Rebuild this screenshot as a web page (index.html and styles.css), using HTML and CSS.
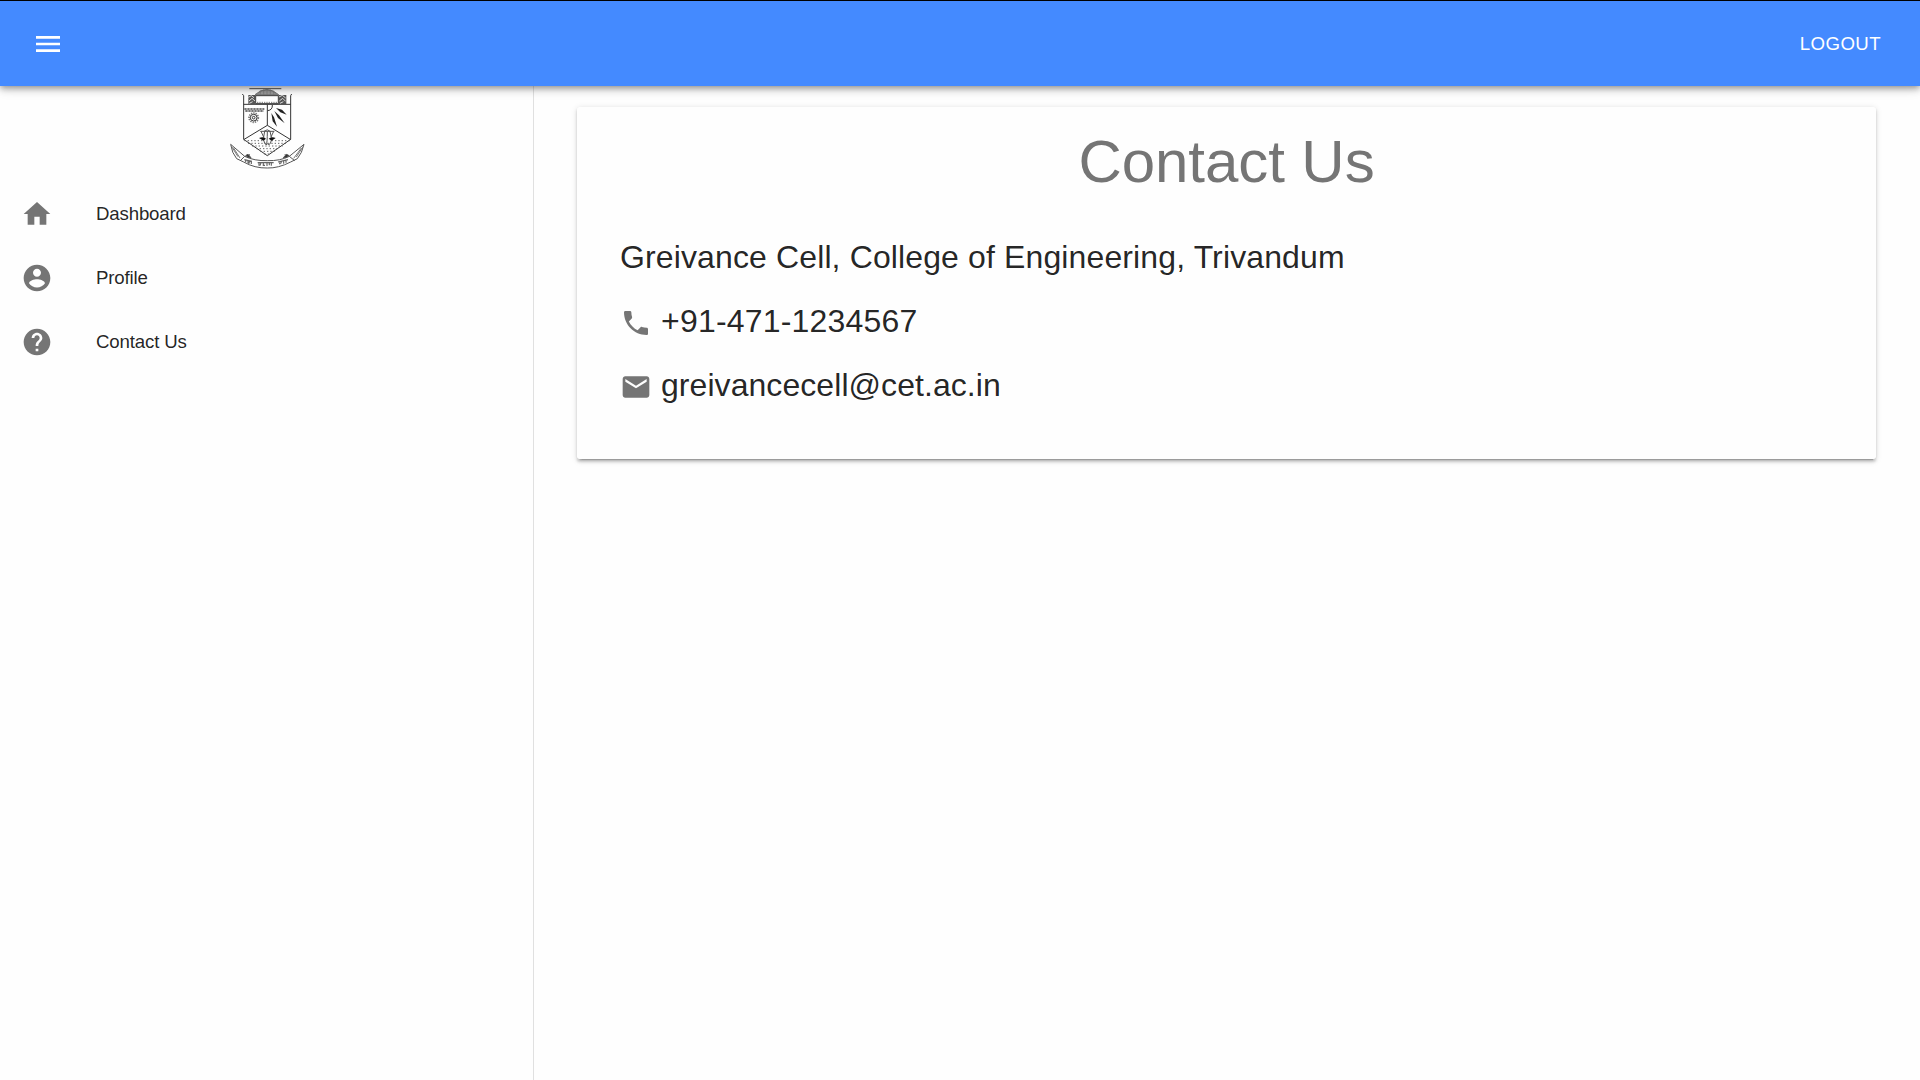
FILE: index.html
```html
<!DOCTYPE html>
<html lang="en">
<head>
<meta charset="utf-8">
<title>Contact Us</title>
<link rel="stylesheet" href="styles.css">
</head>
<body>
<header class="app-bar">
  <svg class="icon menu-icon" viewBox="0 0 24 24"><path d="M3 18h18v-2H3v2zm0-5h18v-2H3v2zm0-7v2h18V6H3z"/></svg>
  <span class="logout">LOGOUT</span>
</header>
<div class="layout">
  <aside class="sidebar">
    <svg class="emblem" viewBox="54 33 234 252">
      <g fill="none" stroke="#333" stroke-width="3">
        <path d="M118 41H214" stroke="#555"/>
        <path d="M135 59Q170 28 206 59Z" fill="#999" stroke="#777"/>
        <path d="M143 56Q170 34 199 56M151 46V60M161 43V60M171 41V60M181 43V60M191 47V60" stroke="#777" stroke-width="2"/>
        <path d="M97 57L101 62V193L172 242L242 193V62L245 57M101 88H242"/>
        <path d="M137 62H205V86H137Z" fill="#fff"/>
        <path d="M172 88V151M101 194L172 151L242 194"/>
        <path d="M187 90Q188 105 173 107"/>
        <path d="M141 82H203" stroke="#777" stroke-dasharray="4 3"/>
        <path d="M103 102H163M106 108H161" stroke="#777" stroke-width="6" stroke-dasharray="7 2"/>
        <circle cx="131" cy="128" r="14" stroke="#777" stroke-width="5" stroke-dasharray="4 3"/>
        <circle cx="131" cy="128" r="10"/><circle cx="131" cy="128" r="4"/>
      </g>
      <g fill="#555"><path d="M115 60H137V87H115ZM205 60H229V87H205Z"/></g>
      <path d="M115 67L124 62L132 68M117 78L126 70L135 78M118 85L128 80M207 66L217 61L227 69M208 78L218 70L227 79M210 85L220 80" fill="none" stroke="#ddd" stroke-width="3"/>
      <g fill="#222"><path d="M198 99L216 104L230 119L211 112ZM193 108L207 121L224 145L204 129ZM184 114L192 127L201 155L188 139Z"/></g>
      <g stroke="#555" fill="none" stroke-width="3">
        <path d="M151 169H193M153 169L161 186M191 169L183 186M164 169Q156 202 169 210Q172 202 172 169M180 169Q190 202 176 210L172 205M162 169Q172 160 181 169"/>
        <path d="M103 197H160M185 197H240M114 205H230M126 213H218M139 221H205M151 229H194M163 237H182" stroke="#666" stroke-dasharray="4 6"/>
      </g>
      <path d="M147 189Q160 183 168 191L160 197ZM197 189Q185 183 176 191L185 197Z" fill="#111"/>
      <g fill="none" stroke="#555" stroke-width="3">
        <path d="M62 208L104 244Q133 258 172 257Q211 258 238 244L282 208Q276 235 262 251L242 261Q205 280 172 279Q134 280 101 261L80 251Q66 235 62 208Z"/>
        <path d="M104 244L90 258M238 244L254 257M105 244L120 239M239 244L224 239"/>
        <path d="M65 215L84 245M70 218L90 249M279 215L259 246M274 219L251 250" stroke="#777"/>
        <path d="M108 241L114 238L123 248L113 247ZM236 241L229 238L220 248L231 247Z" fill="#333"/>
        <path d="M103 254L126 259M107 255V262M114 257V265M119 258L116 267M124 259V267M143 263H191M147 263V272M153 263L150 272M160 263V271H165M171 263V273M178 263V271M184 263V272M204 261L234 254M209 260V268M215 258L212 266M221 257V266M228 255V263" stroke="#666" stroke-width="3.5"/>
      </g>
    </svg>
    <nav class="nav">
      <div class="nav-item"><svg class="icon" viewBox="0 0 24 24"><path d="M10 20v-6h4v6h5v-8h3L12 3 2 12h3v8z"/></svg><span>Dashboard</span></div>
      <div class="nav-item"><svg class="icon" viewBox="0 0 24 24"><path d="M12 2C6.48 2 2 6.48 2 12s4.48 10 10 10 10-4.48 10-10S17.520 2 12 2zm0 3c1.660 0 3 1.340 3 3s-1.340 3-3 3-3-1.340-3-3 1.340-3 3-3zm0 14.200c-2.500 0-4.710-1.280-6-3.220.030-1.990 4-3.080 6-3.080 1.990 0 5.970 1.090 6 3.080-1.290 1.940-3.500 3.220-6 3.220z"/></svg><span>Profile</span></div>
      <div class="nav-item"><svg class="icon" viewBox="0 0 24 24"><path d="M12 2C6.48 2 2 6.48 2 12s4.480 10 10 10 10-4.480 10-10S17.520 2 12 2zm1 17h-2v-2h2v2zm2.070-7.750l-.9.920C13.450 12.900 13 13.500 13 15h-2v-.5c0-1.100.450-2.100 1.170-2.830l1.240-1.260c.370-.360.590-.860.590-1.410 0-1.100-.9-2-2-2s-2 .9-2 2H8c0-2.210 1.790-4 4-4s4 1.790 4 4c0 .880-.360 1.680-.930 2.250z"/></svg><span>Contact Us</span></div>
    </nav>
  </aside>
  <main class="content">
    <section class="card">
      <h1 class="title">Contact Us</h1>
      <p class="line">Greivance Cell, College of Engineering, Trivandum</p>
      <p class="line phone"><svg class="icon" viewBox="0 0 24 24"><path d="M6.620 10.790c1.440 2.830 3.760 5.140 6.590 6.590l2.200-2.200c.270-.270.670-.360 1.020-.240 1.120.370 2.330.570 3.570.570.550 0 1 .450 1 1V20c0 .550-.450 1-1 1-9.390 0-17-7.610-17-17 0-.550.450-1 1-1h3.500c.550 0 1 .450 1 1 0 1.250.2 2.450.570 3.570.110.350.030.740-.250 1.020l-2.200 2.200z"/></svg><span>+91-471-1234567</span></p>
      <p class="line email"><svg class="icon" viewBox="0 0 24 24"><path d="M20 4H4c-1.100 0-1.990.9-1.990 2L2 18c0 1.100.9 2 2 2h16c1.100 0 2-.9 2-2V6c0-1.100-.9-2-2-2zm0 4l-8 5-8-5V6l8 5 8-5v2z"/></svg><span>greivancecell@cet.ac.in</span></p>
    </section>
  </main>
</div>
</body>
</html>
```
FILE: styles.css
```css
* { box-sizing: border-box; }

body {
  margin: 0;
  height: 1080px;
  overflow: hidden;
  display: flex;
  flex-direction: column;
  background: #fefefe;
  color: rgba(0, 0, 0, 0.87);
  font-family: "Liberation Sans", Arial, sans-serif;
}

.icon {
  width: 32px;
  height: 32px;
  flex: none;
  fill: #757575;
}

.app-bar {
  position: relative;
  z-index: 1;
  flex: none;
  height: 86px;
  padding: 0 39px 0 32px;
  display: flex;
  align-items: center;
  justify-content: space-between;
  border-top: 1px solid #000;
  background: #448aff;
  color: #fff;
  box-shadow: 0 2.67px 5.33px -1.33px rgba(0, 0, 0, 0.25),
    0 5.33px 6.67px 0 rgba(0, 0, 0, 0.17),
    0 1.33px 13.33px 0 rgba(0, 0, 0, 0.14);
}

.menu-icon { fill: #fff; }

.logout {
  font-size: 18.67px;
  letter-spacing: 0.4px;
}

.layout {
  flex: 1;
  display: flex;
}

.sidebar {
  width: 534px;
  flex: none;
  display: flex;
  flex-direction: column;
  border-right: 1px solid #e0e0e0;
}

.emblem {
  width: 78px;
  height: 84px;
  margin-left: 228px;
}

.nav { padding-top: 12px; }

.nav-item {
  height: 64px;
  padding-left: 21.33px;
  display: flex;
  align-items: center;
  gap: 42.67px;
  font-size: 18.67px;
  letter-spacing: -0.16px;
}

.content {
  flex: 1;
  padding: 21px 44px 0 43px;
}

.card {
  height: 352px;
  padding: 21px 43px;
  border-radius: 2.67px;
  background: #fefefe;
  box-shadow: 0 4px 1.33px -2.67px rgba(0, 0, 0, 0.2),
    0 2.67px 2.67px 0 rgba(0, 0, 0, 0.17),
    0 1.33px 6.67px 0 rgba(0, 0, 0, 0.13);
}

.title {
  margin: 0 0 40px;
  font-size: 60px;
  font-weight: 400;
  line-height: 68px;
  text-align: center;
  letter-spacing: -0.06px;
  color: #757575;
}

.line {
  margin: 0 0 21px;
  height: 43px;
  display: flex;
  align-items: center;
  gap: 9px;
  font-size: 32px;
  letter-spacing: 0.125px;
}
.phone { letter-spacing: 0.2px; }
.email { letter-spacing: 0.06px; }
.line .icon { margin-top: 3px; }
```
